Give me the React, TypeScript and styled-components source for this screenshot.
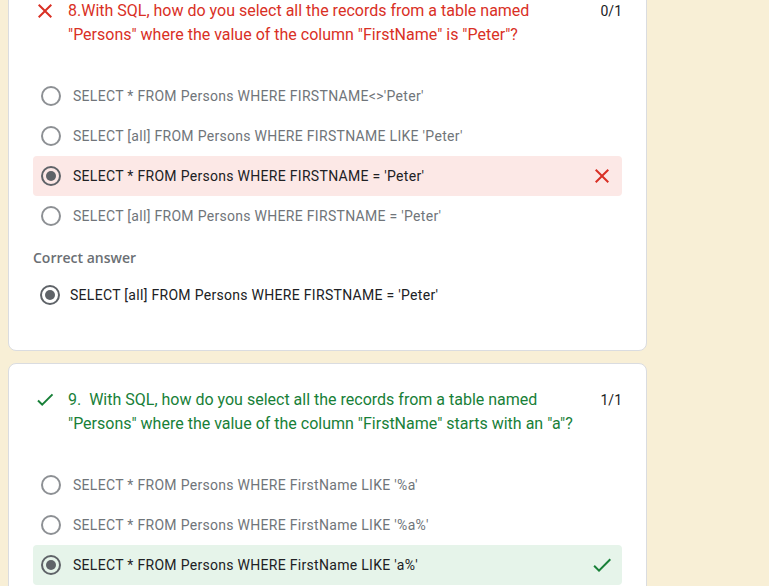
import React from 'react';
import styled, { createGlobalStyle } from 'styled-components';

const GlobalStyle = createGlobalStyle`
  body {
    margin: 0;
    background: #f8efd6;
    font-family: Roboto, 'Liberation Sans', Arial, sans-serif;
  }
`;

const RED = '#d93025';
const GREEN = '#188038';

const Page = styled.div`
  display: flex;
  flex-direction: column;
  gap: 12px;
  padding-left: 8px;
  margin-top: -26px;
`;

const Card = styled.div`
  box-sizing: border-box;
  width: 639px;
  background: #fff;
  border: 1px solid #dadce0;
  border-radius: 8px;
  padding: 24px 24px 25px;
`;

const Header = styled.div`
  display: flex;
  align-items: flex-start;
`;

const HeaderIcon = styled.div`
  width: 24px;
  height: 24px;
  flex: none;
  margin-right: 11px;
  display: flex;
  align-items: center;
  justify-content: center;
`;

const QuestionText = styled.div<{ $color: string }>`
  flex: 1;
  font-size: 16px;
  line-height: 24px;
  color: ${(p) => p.$color};
  white-space: pre-wrap;
`;

const Score = styled.div`
  flex: none;
  margin-left: 24px;
  font-size: 14px;
  line-height: 24px;
  color: #202124;
`;

const Options = styled.div`
  margin-top: 29px;
  display: flex;
  flex-direction: column;
`;

const OptionRow = styled.div<{ $bg?: string }>`
  height: 40px;
  display: flex;
  align-items: center;
  gap: 12px;
  padding: 0 8px;
  border-radius: 4px;
  background: ${(p) => p.$bg || 'transparent'};
`;

const OptionText = styled.span<{ $checked?: boolean }>`
  font-size: 14px;
  letter-spacing: 0.3px;
  color: ${(p) => (p.$checked ? '#202124' : '#70757a')};
`;

const TrailingIcon = styled.div`
  margin-left: auto;
  width: 24px;
  height: 24px;
`;

const RadioOuter = styled.div<{ $checked?: boolean }>`
  box-sizing: border-box;
  width: 20px;
  height: 20px;
  flex: none;
  border-radius: 50%;
  border: 2px solid ${(p) => (p.$checked ? '#5f6368' : '#8d9094')};
  display: flex;
  align-items: center;
  justify-content: center;
`;

const RadioDot = styled.div`
  width: 10px;
  height: 10px;
  border-radius: 50%;
  background: #5f6368;
`;

const CorrectLabel = styled.div`
  margin-top: 12px;
  font-family: 'Open Sans', Roboto, sans-serif;
  font-size: 14px;
  line-height: 20px;
  font-weight: 600;
  color: #6b6f74;
`;

const CorrectRow = styled.div`
  margin-top: 7px;
  height: 40px;
  display: flex;
  align-items: center;
  gap: 10px;
  padding: 0 7px 10px;
`;

const CloseIcon = ({ size = 24 }: { size?: number }) => (
  <svg width={size} height={size} viewBox="0 0 24 24" fill={RED}>
    <path d="M19 6.41L17.59 5 12 10.59 6.41 5 5 6.41 10.59 12 5 17.59 6.41 19 12 13.41 17.59 19 19 17.59 13.41 12z" />
  </svg>
);

const CheckIcon = ({ size = 24 }: { size?: number }) => (
  <svg width={size} height={size} viewBox="0 0 24 24" fill={GREEN}>
    <path d="M9 16.17L4.83 12l-1.42 1.41L9 19 21 7l-1.41-1.41z" />
  </svg>
);

// smaller check with heavier stroke, used next to the question title
const TitleCheck = () => (
  <svg width="20" height="20" viewBox="0 0 20 20" fill="none" stroke={GREEN} strokeWidth="2">
    <path d="M3 10.5l4.2 4.2L17.5 4.4" />
  </svg>
);

const Radio = ({ checked }: { checked?: boolean }) => (
  <RadioOuter $checked={checked}>{checked && <RadioDot />}</RadioOuter>
);

type Option = { text: string; checked?: boolean };

const Choice = ({ option, status }: { option: Option; status?: 'wrong' | 'right' }) => (
  <OptionRow $bg={status === 'wrong' ? '#fce8e6' : status === 'right' ? '#e6f4ea' : undefined}>
    <Radio checked={option.checked} />
    <OptionText $checked={option.checked}>{option.text}</OptionText>
    {status && <TrailingIcon>{status === 'wrong' ? <CloseIcon /> : <CheckIcon />}</TrailingIcon>}
  </OptionRow>
);

const q8: Option[] = [
  { text: "SELECT * FROM Persons WHERE FIRSTNAME<>'Peter'" },
  { text: "SELECT [all] FROM Persons WHERE FIRSTNAME LIKE 'Peter'" },
  { text: "SELECT * FROM Persons WHERE FIRSTNAME = 'Peter'", checked: true },
  { text: "SELECT [all] FROM Persons WHERE FIRSTNAME = 'Peter'" },
];

const q9: Option[] = [
  { text: "SELECT * FROM Persons WHERE FirstName LIKE '%a'" },
  { text: "SELECT * FROM Persons WHERE FirstName LIKE '%a%'" },
  { text: "SELECT * FROM Persons WHERE FirstName LIKE 'a%'", checked: true },
];

const App: React.FC = () => (
  <>
    <GlobalStyle />
    <Page>
      <Card>
        <Header>
          <HeaderIcon>
            <CloseIcon />
          </HeaderIcon>
          <QuestionText $color={RED}>
            8.With SQL, how do you select all the records from a table named "Persons" where the value of the column "FirstName" is "Peter"?
          </QuestionText>
          <Score>0/1</Score>
        </Header>
        <Options>
          {q8.map((o, i) => (
            <Choice key={i} option={o} status={o.checked ? 'wrong' : undefined} />
          ))}
        </Options>
        <CorrectLabel>Correct answer</CorrectLabel>
        <CorrectRow>
          <Radio checked />
          <OptionText $checked>SELECT [all] FROM Persons WHERE FIRSTNAME = 'Peter'</OptionText>
        </CorrectRow>
      </Card>
      <Card>
        <Header>
          <HeaderIcon>
            <TitleCheck />
          </HeaderIcon>
          <QuestionText $color={GREEN}>
            9.  With SQL, how do you select all the records from a table named "Persons" where the value of the column "FirstName" starts with an "a"?
          </QuestionText>
          <Score>1/1</Score>
        </Header>
        <Options>
          {q9.map((o, i) => (
            <Choice key={i} option={o} status={o.checked ? 'right' : undefined} />
          ))}
        </Options>
      </Card>
    </Page>
  </>
);

export default App;
